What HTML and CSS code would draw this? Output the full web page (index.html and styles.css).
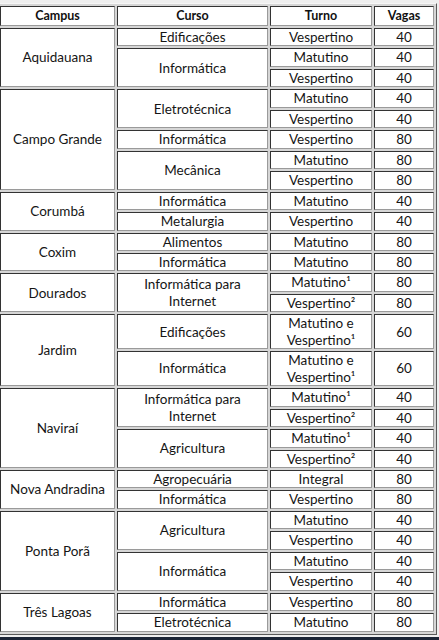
FILE: index.html
```html
<!DOCTYPE html>
<html lang="pt-BR">
<head>
<meta charset="utf-8">
<title>Vagas por campus</title>
<link rel="stylesheet" href="styles.css">
</head>
<body>
<div class="wrap">
<table class="vagas">
<colgroup>
<col class="c-campus">
<col class="c-curso">
<col class="c-turno">
<col class="c-vagas">
</colgroup>
<tr><th>Campus</th><th>Curso</th><th>Turno</th><th>Vagas</th></tr>
<tr><td rowspan="3">Aquidauana</td><td>Edificações</td><td>Vespertino</td><td>40</td></tr>
<tr><td rowspan="2">Informática</td><td>Matutino</td><td>40</td></tr>
<tr><td>Vespertino</td><td>40</td></tr>
<tr><td rowspan="5">Campo Grande</td><td rowspan="2">Eletrotécnica</td><td>Matutino</td><td>40</td></tr>
<tr><td>Vespertino</td><td>40</td></tr>
<tr><td>Informática</td><td>Vespertino</td><td>80</td></tr>
<tr><td rowspan="2">Mecânica</td><td>Matutino</td><td>80</td></tr>
<tr><td>Vespertino</td><td>80</td></tr>
<tr><td rowspan="2">Corumbá</td><td>Informática</td><td>Matutino</td><td>40</td></tr>
<tr><td>Metalurgia</td><td>Vespertino</td><td>40</td></tr>
<tr><td rowspan="2">Coxim</td><td>Alimentos</td><td>Matutino</td><td>80</td></tr>
<tr><td>Informática</td><td>Matutino</td><td>80</td></tr>
<tr><td rowspan="2">Dourados</td><td rowspan="2">Informática para<br>Internet</td><td>Matutino¹</td><td>80</td></tr>
<tr><td>Vespertino²</td><td>80</td></tr>
<tr><td rowspan="2">Jardim</td><td>Edificações</td><td>Matutino e<br>Vespertino¹</td><td>60</td></tr>
<tr><td>Informática</td><td>Matutino e<br>Vespertino¹</td><td>60</td></tr>
<tr><td rowspan="4">Naviraí</td><td rowspan="2">Informática para<br>Internet</td><td>Matutino¹</td><td>40</td></tr>
<tr><td>Vespertino²</td><td>40</td></tr>
<tr><td rowspan="2">Agricultura</td><td>Matutino¹</td><td>40</td></tr>
<tr><td>Vespertino²</td><td>40</td></tr>
<tr><td rowspan="2">Nova Andradina</td><td>Agropecuária</td><td>Integral</td><td>80</td></tr>
<tr><td>Informática</td><td>Vespertino</td><td>80</td></tr>
<tr><td rowspan="4">Ponta Porã</td><td rowspan="2">Agricultura</td><td>Matutino</td><td>40</td></tr>
<tr><td>Vespertino</td><td>40</td></tr>
<tr><td rowspan="2">Informática</td><td>Matutino</td><td>40</td></tr>
<tr><td>Vespertino</td><td>40</td></tr>
<tr><td rowspan="2">Três Lagoas</td><td>Informática</td><td>Vespertino</td><td>80</td></tr>
<tr><td>Eletrotécnica</td><td>Matutino</td><td>80</td></tr>
</table>
</div>
<div class="strip"></div>
</body>
</html>
```
FILE: styles.css
```css
html, body {
  margin: 0;
  padding: 0;
  background: #efefef;
}
body {
  height: 640px;
  overflow: hidden;
  display: flex;
  flex-direction: column;
}
.wrap {
  padding-top: 3px;
  margin-left: -3px;
}
.vagas {
  border-collapse: separate;
  border-spacing: 2px;
  border: 1px solid;
  border-color: #f6f6f6 #5a5a5a #5a5a5a #f6f6f6;
  background: #d6d6d6;
  table-layout: fixed;
  width: 440px;
  font-family: Lato, "Open Sans", sans-serif;
  font-size: 13.5px;
  color: #151515;
}
.c-campus { width: 115px; }
.c-curso { width: 151px; }
.c-turno { width: 102px; }
.c-vagas { width: 60px; }
.vagas th,
.vagas td {
  border: 1px solid;
  border-color: #333333 #9a9a9a #9a9a9a #333333;
  background: #ffffff;
  padding: 0 2px;
  text-align: center;
  vertical-align: middle;
  line-height: 16.45px;
}
.vagas th {
  font-weight: 700;
  font-size: 12.5px;
  line-height: 18px;
  color: #111111;
}
.strip {
  margin-top: auto;
  height: 3px;
  background: #1b2536;
}
```
